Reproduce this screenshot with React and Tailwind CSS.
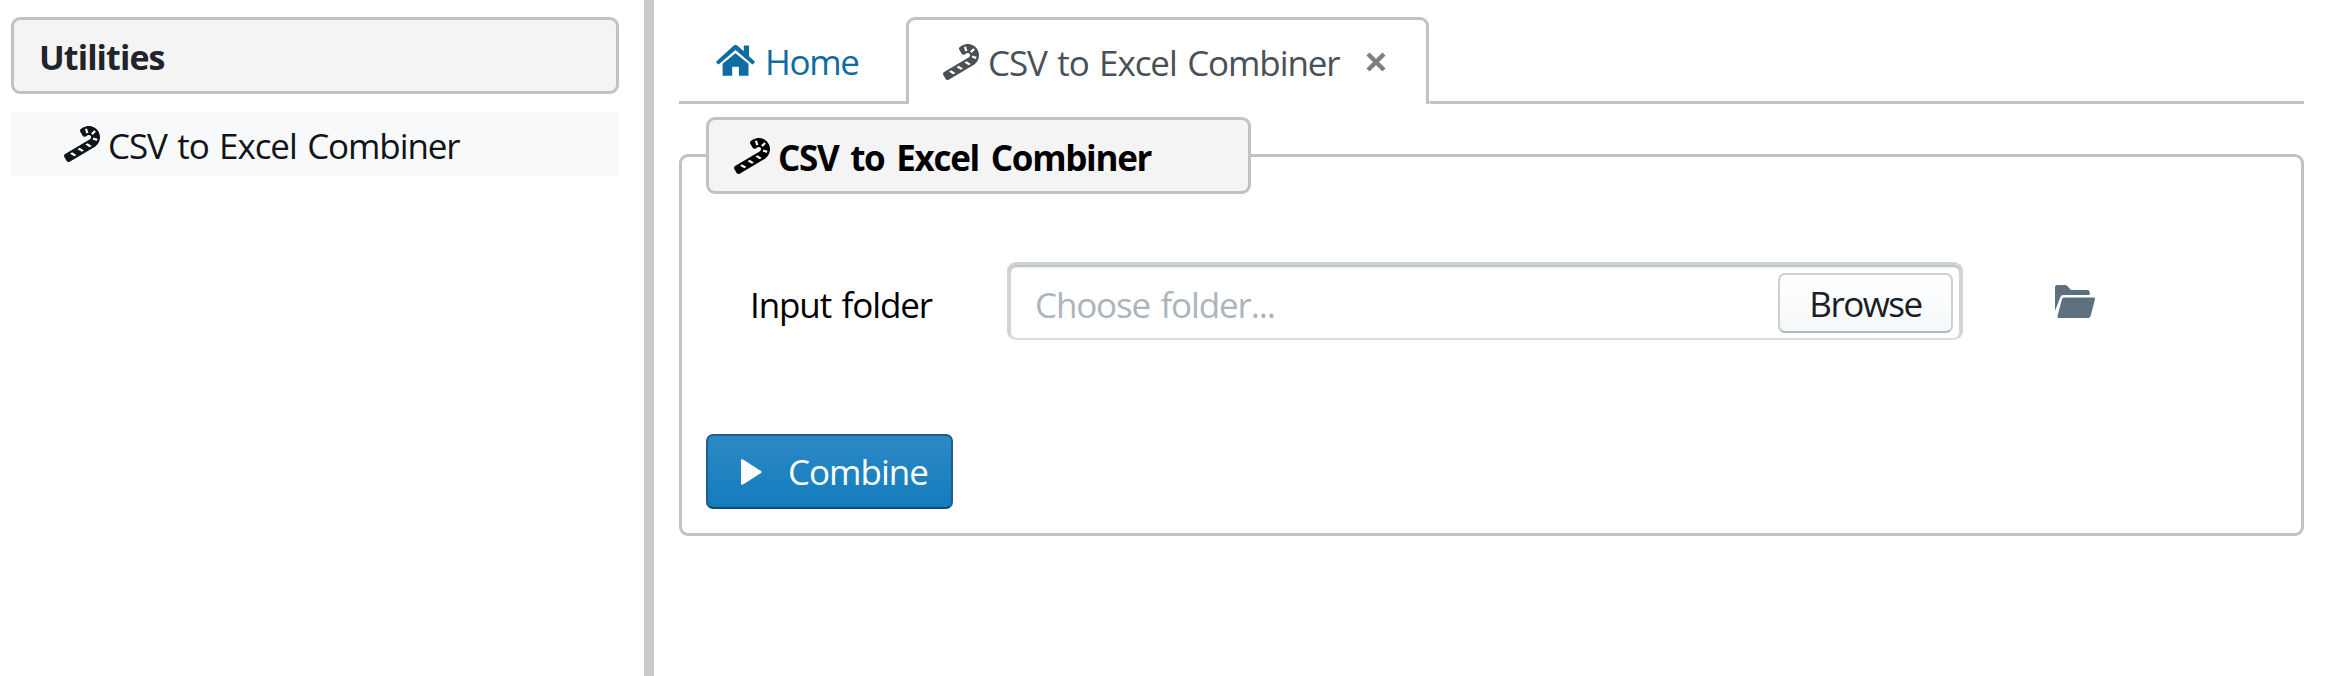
import { FaCandyCane } from "react-icons/fa";

function Cane() {
  return <FaCandyCane className="h-[36px] w-[36px] shrink-0" />;
}

function HomeIcon() {
  return (
    <svg className="h-[31px] w-[39px] shrink-0" viewBox="0 0 39 31" fill="#106ba3">
      <path d="M19.5 8.2 6.600 18.800V30.700h9.600v-8.900h6.700v8.900h9.600V18.800z" />
      <path d="M38.500 16.200 33 11.200V.4h-5.200v5.800L21.200.6a2.600 2.600 0 0 0-3.400 0L.5 16.200a1 1 0 0 0 0 1.400l1.200 1.500c.4.4 1 .4 1.500 0L19.500 5.100l16.300 14c.5.4 1.100.4 1.500 0l1.200-1.500a1 1 0 0 0 0-1.400z" />
    </svg>
  );
}

function FolderIcon() {
  return (
    <svg className="h-[33px] w-[40px]" viewBox="0 0 40 33" fill="#5c7080">
      <path d="M0 26V2.200Q0 0 2.200 0H10q1.200 0 2 .8L16 5h16.500q2.200 0 2.200 2.200V10H8.500q-2.500 0-3.200 2.300z" />
      <path d="M8.800 12.500H38.500q1.900 0 1.400 2L35.600 31q-.5 2-2.500 2H4q-2 0-1.500-2L7 14q.4-1.500 1.800-1.500z" />
    </svg>
  );
}

export default function App() {
  return (
    <div className="flex h-[676px] w-[2327px] overflow-hidden bg-white font-['Open_Sans',sans-serif] text-[35px] leading-[48px] tracking-[-1.1px] [word-spacing:2.5px] whitespace-nowrap">
      <aside className="w-[644px] shrink-0 pt-[17px] pl-[11px]">
        <div className="flex h-[77px] w-[608px] items-center rounded-[9px] border-3 border-[#bdc3c7] bg-[#f4f4f4] pt-[2px] pl-[25px] text-[34px] font-bold tracking-[-0.9px] text-[#212529]">
          Utilities
        </div>
        <div className="mt-[18px] flex h-[64px] w-[608px] items-center bg-[#f8f9fb] pl-[53px] text-[#111418]">
          <Cane />
          <span className="ml-[8px] pt-[3px]">CSV to Excel Combiner</span>
        </div>
      </aside>
      <div className="w-[10px] shrink-0 bg-[#cacaca]" />
      <main className="w-[1673px] pt-[17px] pl-[25px]">
        <nav className="flex h-[87px] w-[1625px]">
          <div className="flex w-[227px] items-center border-b-3 border-[#bdc3c7] pt-[3px] pl-[37px] text-[#106ba3]">
            <HomeIcon />
            <span className="ml-[10px] pt-[3px] tracking-[-1.3px]">Home</span>
          </div>
          <div className="flex w-[523px] items-center rounded-t-[9px] border-3 border-b-0 border-[#bdc3c7] pl-[34px] text-[#495057]">
            <Cane />
            <span className="ml-[9px] w-[353px] pt-px">CSV to Excel Combiner</span>
            <svg className="ml-[25px] h-[20px] w-[20px] shrink-0" viewBox="0 0 20 20" stroke="#808080" strokeWidth="4.500">
              <path d="M2 2 18 18M18 2 2 18" />
            </svg>
          </div>
          <div className="flex-1 rounded-bl-[3px] border-b-3 border-[#bdc3c7]" />
        </nav>
        <section className="mt-[50px] h-[382px] w-[1625px] rounded-[9px] border-3 border-[#bdc3c7] pl-[24px]">
          <h2 className="-mt-[40px] flex h-[77px] w-[545px] items-center rounded-[9px] border-3 border-[#bdc3c7] bg-[#f4f4f4] pl-[25px] font-bold tracking-[-1.3px] text-black [word-spacing:4px]">
            <Cane />
            <span className="ml-[8px] pt-[4px]">CSV to Excel Combiner</span>
          </h2>
          <div className="mt-[68px] flex h-[78px] items-center pl-[44px]">
            <label className="w-[257px] pt-[8px] text-black">Input folder</label>
            <div className="flex h-[78px] w-[956px] items-center justify-between rounded-[9px] border-3 border-[#ced4da] border-b-2 border-b-[#dcdcdc] pr-[7px] pl-[25px] shadow-[inset_0_2px_2px_rgba(16,22,26,0.3),inset_1px_0_0_rgba(16,22,26,0.1),inset_-1px_0_0_rgba(16,22,26,0.1)]">
              <span className="pt-[6px] tracking-[-1.15px] text-[#abb5be]">Choose folder...</span>
              <button className="h-[60px] w-[175px] translate-y-px rounded-[7px] border-2 border-[#cdd0d2] border-b-[#b4b8bb] bg-linear-to-b from-white to-[#f5f8fa] pt-[3px] tracking-[-1.5px] text-[#182026]">Browse</button>
            </div>
            <span className="ml-[92px] flex"><FolderIcon /></span>
          </div>
          <button className="mt-[94px] flex h-[75px] w-[247px] items-center rounded-[7px] border-2 border-[#1f5f88] border-b-[#0e4a70] bg-linear-to-b from-[#2b89c5] to-[#137cbd] pl-[33px] text-white">
            <svg className="h-[26px] w-[21px]" viewBox="0 0 21 26" fill="white"><path d="M0 1.500Q0-.6 2 .6L20 12q1.500 1 0 2L2 25.400Q0 26.600 0 24.500z" /></svg>
            <span className="ml-[26px] pt-px tracking-[-1px]">Combine</span>
          </button>
        </section>
      </main>
    </div>
  );
}
